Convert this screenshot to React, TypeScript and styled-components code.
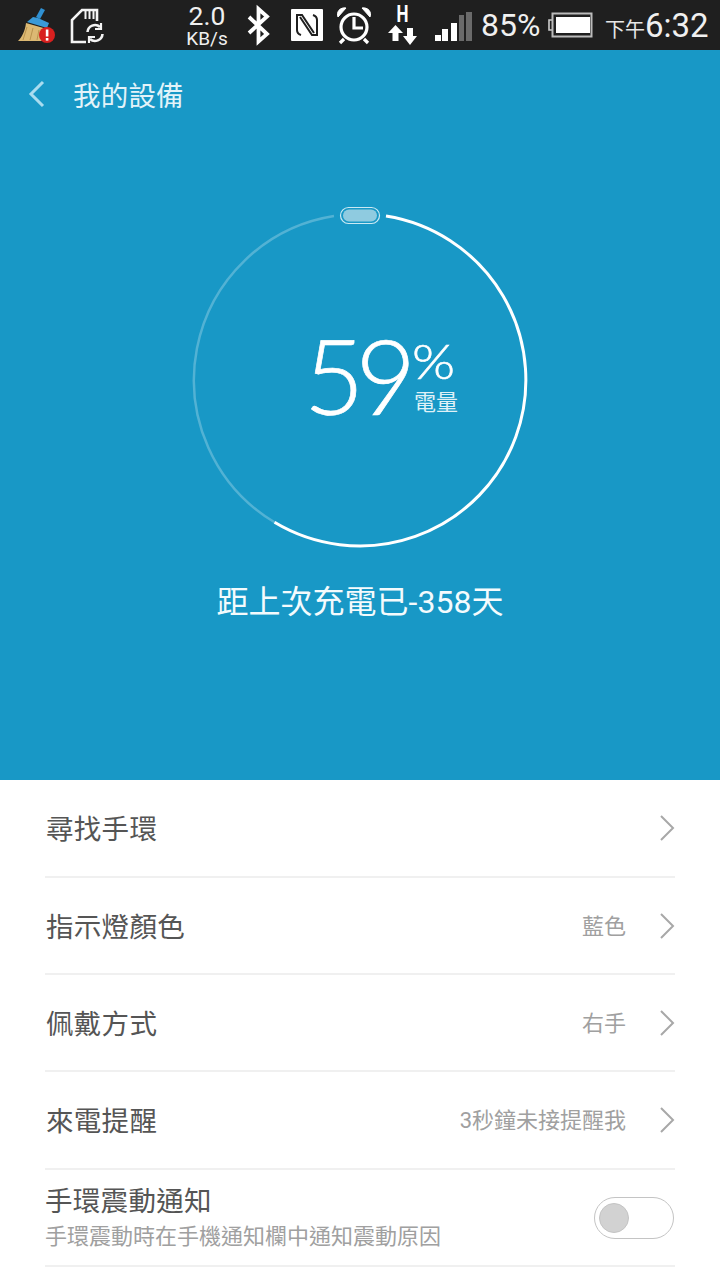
import React from "react";
import styled, { createGlobalStyle } from "styled-components";

const Global = createGlobalStyle`
  html, body { margin: 0; padding: 0; background: #fff; }
  #root { width: 720px; height: 1280px; overflow: hidden; }
`;
const FONT = `"Roboto", "Noto Sans CJK TC", sans-serif`;
const Page = styled.div`width:720px;height:1280px;display:flex;flex-direction:column;font-family:${FONT};overflow:hidden;background:#fff;`;
const StatusBar = styled.div`height:50px;flex:none;background:#1f1f1f;color:#f0f0f0;display:flex;align-items:center;padding:0 12px 0 17px;white-space:nowrap;`;
const IconSlot = styled.div<{ $w: number; $ml: number }>`width:${p=>p.$w}px;height:50px;margin-left:${p=>p.$ml}px;flex:none;display:flex;align-items:center;justify-content:center;svg{display:block;overflow:visible;}`;
const Speed = styled.div`width:46px;margin-left:80px;flex:none;display:flex;flex-direction:column;align-items:center;line-height:1;`;
const SpeedValue = styled.span`font-size:26.500px;height:26px;line-height:26px;`;
const SpeedUnit = styled.span`font-size:19px;height:19px;line-height:19px;`;
const Percent = styled.span`font-size:32px;margin-left:8px;flex:none;width:58px;`;
const Ampm = styled.span`font-size:20px;margin-left:11px;margin-top:6px;color:#e8e8e8;flex:none;`;
const Clock = styled.span`font-size:33px;flex:none;`;
const Hero = styled.section`height:730px;flex:none;background:#1898c6;color:#fff;display:flex;flex-direction:column;`;
const NavBar = styled.div`height:88px;flex:none;display:flex;align-items:center;padding-left:28px;`;
const NavTitle = styled.span`font-size:27.500px;margin-left:27px;color:#e3f3f9;letter-spacing:.2px;`;
const GaugeWrap = styled.div`position:relative;width:340px;height:340px;margin:72px auto 0;svg{overflow:visible;}`;
const GaugeCenter = styled.div`position:absolute;left:114px;top:113px;display:flex;align-items:flex-start;`;
const Big = styled.div`font-family:"Lato","Roboto",sans-serif;font-weight:300;-webkit-text-stroke:.7px #fff;font-size:104px;line-height:104px;letter-spacing:-8.500px;`;
const Side = styled.div`position:absolute;left:108px;top:0;display:flex;flex-direction:column;`;
const Pct = styled.div`font-family:"Lato","Roboto",sans-serif;font-weight:300;-webkit-text-stroke:.6px #fff;font-size:48px;line-height:48px;margin-top:14px;transform:scaleX(1.150);transform-origin:left center;`;
const Level = styled.div`font-size:22px;line-height:26px;margin:5px 0 0 2px;color:#dff1f7;white-space:nowrap;`;
const Since = styled.div`margin-top:30px;text-align:center;font-size:32px;line-height:44px;color:#f4fbfd;`;
const List = styled.div`padding:0 45px;display:flex;flex-direction:column;`;
const Row = styled.div<{ $h: number }>`height:${p=>p.$h}px;flex:none;box-sizing:border-box;border-bottom:2px solid #f0f0f0;display:flex;align-items:center;`;
const Label = styled.span`font-size:27.500px;color:#555;letter-spacing:.3px;flex:1;margin:-2px 0 0 1px;`;
const Value = styled.span`font-size:22px;color:#a0a0a0;margin:-4px 33px 0 0;`;
const Stack = styled.div`flex:1;display:flex;flex-direction:column;`;
const SubLabel = styled.span`font-size:22px;line-height:30px;margin-top:2px;color:#a0a0a0;`;
const ToggleLabel = styled.span`font-size:27.500px;line-height:36px;color:#555;letter-spacing:.3px;`;
const Toggle = styled.div`width:80px;height:42px;box-sizing:border-box;border:1px solid #c4c4c4;border-radius:21px;background:#fff;display:flex;align-items:center;padding-left:4px;margin-right:1px;`;
const Knob = styled.div`width:30px;height:30px;border-radius:50%;background:#d2d2d2;border:1px solid #c4c4c4;box-sizing:border-box;`;

const Chevron = () => (
  <svg width="16" height="28" viewBox="0 0 16 28" fill="none" stroke="#a8a8a8" strokeWidth="2"><path d="M2 2l12 12L2 26" /></svg>
);
const cx = 170, cy = 170, r = 166;
const pt = (a: number) => { const t = (a - 90) * Math.PI / 180; return `${(cx + r * Math.cos(t)).toFixed(1)} ${(cy + r * Math.sin(t)).toFixed(1)}`; };
const arc = (a: number, b: number) => `M${pt(a)}A${r} ${r} 0 ${b - a > 180 ? 1 : 0} 1 ${pt(b)}`;

export default function App() {
  return (
    <Page>
      <Global />
      <StatusBar>
        <IconSlot $w={38} $ml={0}>
          <svg width="38" height="38" viewBox="17 6 38 38">
            <path d="M41 8l4 2-5 9-4-2z" fill="#2f90d2"/>
            <path d="M33 17l5 1 11 5-2 5-20-6z" fill="#3a9ad8"/>
            <path d="M26 23l21 6c0 5-1 9-3 12H18c4-4 7-10 8-18z" fill="#dcb973"/>
            <path d="M27 27l-4 13M33 28l-3 12M39 30l-2 10" stroke="#b8924e" strokeWidth="1" fill="none"/>
            <circle cx="47" cy="35" r="8" fill="#d8201f"/>
            <rect x="45.800" y="29.500" width="2.600" height="7" fill="#fff"/><rect x="45.800" y="38" width="2.600" height="2.600" fill="#fff"/>
          </svg>
        </IconSlot>
        <IconSlot $w={36} $ml={13}>
          <svg width="36" height="38" viewBox="68 6 36 38" fill="none" stroke="#f4f4f4" strokeWidth="2.600">
            <path d="M86 42H72V20L82 10h15v11"/>
            <path d="M85.500 11v8M89.500 11v8M93.500 11v8" strokeWidth="2"/>
            <path d="M87.500 32a7.500 7.500 0 0 1 12.500-5"/><path d="M102.500 34a7.500 7.500 0 0 1-12.500 5"/>
            <path d="M101 23v6h-6" strokeWidth="2.200"/><path d="M89 43v-6h6" strokeWidth="2.200"/>
          </svg>
        </IconSlot>
        <Speed><SpeedValue>2.0</SpeedValue><SpeedUnit>KB/s</SpeedUnit></Speed>
        <IconSlot $w={24} $ml={17}>
          <svg width="24" height="38" viewBox="0 0 24 38" fill="none" stroke="#fff" strokeWidth="3.800"><path d="M2 11l18 17-8.500 7.500V3l8.500 7.500L2 27"/></svg>
        </IconSlot>
        <IconSlot $w={32} $ml={20}>
          <svg width="32" height="32" viewBox="0 0 32 32" fill="none">
            <rect width="32" height="32" rx="1" fill="#fff"/>
            <path d="M10 26C7 25 6 24 6 21V6h5l12 18" stroke="#1f1f1f" strokeWidth="2"/>
            <path d="M22 6c3 1 4 2 4 5v15h-5L9 8" stroke="#1f1f1f" strokeWidth="2"/>
          </svg>
        </IconSlot>
        <IconSlot $w={38} $ml={13}>
          <svg width="38" height="38" viewBox="0 0 38 38" fill="none" stroke="#fff" strokeWidth="3.200">
            <circle cx="18" cy="21" r="13"/><path d="M18 11v11h9"/>
            <path d="M8 33l-4 4M28 33l4 4"/>
            <path d="M2 11C0 6 4 1 10 2z" fill="#fff" strokeWidth="1"/><path d="M34 11c2-5-2-10-8-9z" fill="#fff" strokeWidth="1"/>
          </svg>
        </IconSlot>
        <IconSlot $w={30} $ml={13}>
          <svg width="30" height="40" viewBox="0 0 30 40" fill="#fff">
            <text x="9.500" y="17" fontFamily="Roboto" fontWeight="700" fontSize="23" textLength={12} lengthAdjust="spacingAndGlyphs">H</text>
            <path d="M8.500 20l7.500 8h-4.500v8h-6v-8H1zM23 40l-7-9h4v-8h6v8h4z"/>
          </svg>
        </IconSlot>
        <IconSlot $w={38} $ml={18}>
          <svg width="38" height="34" viewBox="0 8 38 34">
            <rect x="0" y="35" width="6" height="6" fill="#fff"/><rect x="7" y="29" width="6" height="12" fill="#fff"/><rect x="16" y="23" width="6" height="18" fill="#fff"/>
            <rect x="24" y="15" width="5" height="26" fill="#6a6a6a"/><rect x="31" y="12" width="6" height="29" fill="#6a6a6a"/>
          </svg>
        </IconSlot>
        <Percent>85%</Percent>
        <IconSlot $w={46} $ml={9}>
          <svg width="46" height="26" viewBox="0 0 46 26" fill="none">
            <path d="M4 8H1v10h3" stroke="#ccc" strokeWidth="1.600"/>
            <rect x="4.500" y="1.500" width="39" height="23" stroke="#bbb" strokeWidth="2"/>
            <rect x="8" y="5" width="34" height="16" fill="#fff"/>
          </svg>
        </IconSlot>
        <Ampm>下午</Ampm><Clock>6:32</Clock>
      </StatusBar>
      <Hero>
        <NavBar>
          <svg width="18" height="28" viewBox="0 0 18 28" fill="none" stroke="#a9dcef" strokeWidth="3"><path d="M15 2L3 14l12 12"/></svg>
          <NavTitle>我的設備</NavTitle>
        </NavBar>
        <GaugeWrap>
          <svg width="340" height="340" viewBox="0 0 340 340" fill="none">
            <path d={arc(211,351)} stroke="#fff" strokeOpacity=".25" strokeWidth="2.500"/>
            <path d={arc(9,211)} stroke="#fff" strokeWidth="3"/>
            <rect x="150.500" y="-2.500" width="39" height="16" rx="8" stroke="#cbe9f3" strokeWidth="1.200"/>
            <rect x="153" y="-0.500" width="34" height="12" rx="6" fill="#8fcbe0"/>
          </svg>
          <GaugeCenter>
            <Big>59</Big>
            <Side><Pct>%</Pct><Level>電量</Level></Side>
          </GaugeCenter>
        </GaugeWrap>
        <Since>距上次充電已-358天</Since>
      </Hero>
      <List>
        <Row $h={98}><Label>尋找手環</Label><Chevron/></Row>
        <Row $h={97}><Label>指示燈顏色</Label><Value>藍色</Value><Chevron/></Row>
        <Row $h={97}><Label>佩戴方式</Label><Value>右手</Value><Chevron/></Row>
        <Row $h={98}><Label>來電提醒</Label><Value>3秒鐘未接提醒我</Value><Chevron/></Row>
        <Row $h={97}>
          <Stack><ToggleLabel>手環震動通知</ToggleLabel><SubLabel>手環震動時在手機通知欄中通知震動原因</SubLabel></Stack>
          <Toggle><Knob/></Toggle>
        </Row>
      </List>
    </Page>
  );
}
